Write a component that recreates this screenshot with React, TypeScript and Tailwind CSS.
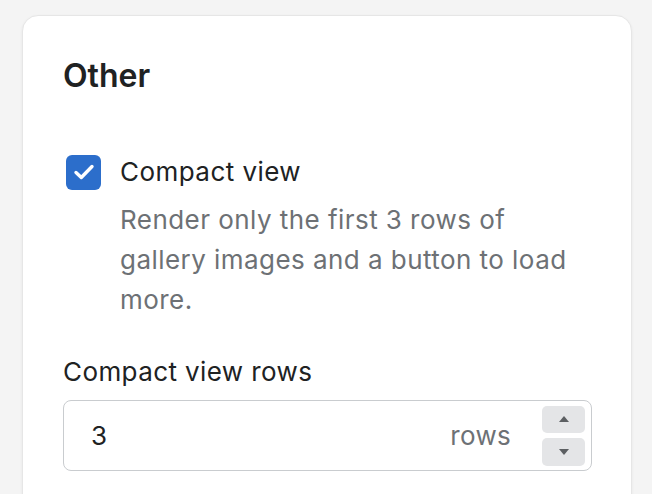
import React from "react";

export default function App() {
  return (
    <div
      className="w-[652px] h-[494px] overflow-hidden bg-[#f4f4f4]"
      style={{ fontFamily: "Inter, 'Noto Sans', sans-serif" }}
    >
      <div className="ml-[22px] mt-[15px] w-[610px] h-[600px] rounded-[16px] border border-[#e6e6e6] bg-white shadow-[0_1px_3px_rgba(0,0,0,0.06)] pl-[40px] pr-[39px] pt-[40px]">
        <h2 className="text-[32px] leading-[40px] font-semibold text-[#202223]">Other</h2>

        <div className="mt-[56px] flex items-start">
          <div className="h-[40px] flex items-center ml-[3px]">
            <div className="w-[35px] h-[35px] rounded-[6px] bg-[#2c6ecb] flex items-center justify-center">
              <svg width="22" height="18" viewBox="0 0 22 18" fill="none">
                <path
                  d="M3 9.5 L8.3 14.5 L19 3.5"
                  stroke="white"
                  strokeWidth="3.4"
                  strokeLinecap="round"
                  strokeLinejoin="round"
                />
              </svg>
            </div>
          </div>
          <div className="ml-[19px] flex flex-col tracking-[0.45px]">
            <span className="text-[26px] leading-[40px] text-[#202223]">Compact view</span>
            <p className="mt-[8px] w-[462px] text-[26px] leading-[40px] text-[#6d7175]">
              Render only the first 3 rows of gallery images and a button to load more.
            </p>
          </div>
        </div>

        <label className="mt-[32px] block text-[26px] leading-[40px] tracking-[0.4px] text-[#202223]">
          Compact view rows
        </label>

        <div className="mt-[8px] w-[529px] h-[71px] rounded-[8px] border border-[#c9cccf] flex items-center pl-[27px] pr-[6px]">
          <span className="flex-1 text-[26px] leading-[40px] text-[#202223]">3</span>
          <span className="text-[26px] leading-[40px] tracking-[0.3px] text-[#6d7175]">rows</span>
          <div className="ml-[31px] flex flex-col gap-[5px]">
            <div className="w-[43px] h-[27px] rounded-[5px] bg-[#e4e5e7] flex items-center justify-center">
              <svg width="10" height="6" viewBox="0 0 10 6">
                <path d="M5 0 L10 6 L0 6 Z" fill="#5c5f62" />
              </svg>
            </div>
            <div className="w-[43px] h-[28px] rounded-[5px] bg-[#e4e5e7] flex items-center justify-center">
              <svg width="10" height="6" viewBox="0 0 10 6">
                <path d="M0 0 L10 0 L5 6 Z" fill="#5c5f62" />
              </svg>
            </div>
          </div>
        </div>
      </div>
    </div>
  );
}
